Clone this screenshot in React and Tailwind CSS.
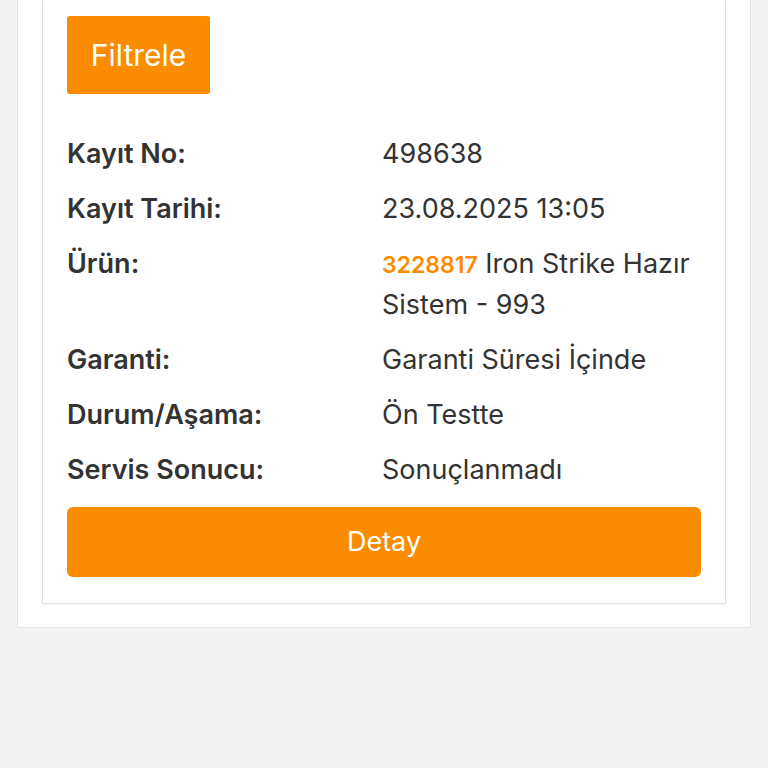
import React from "react";

const rows = [
  { label: "Kayıt No:", value: "498638" },
  { label: "Kayıt Tarihi:", value: "23.08.2025 13:05" },
  {
    label: "Ürün:",
    value: (
      <>
        <span className="text-[23px] font-semibold text-[#fb8c00]">3228817</span>{" "}
        <span>Iron Strike Hazır Sistem - 993</span>
      </>
    ),
  },
  { label: "Garanti:", value: "Garanti Süresi İçinde" },
  { label: "Durum/Aşama:", value: "Ön Testte" },
  { label: "Servis Sonucu:", value: "Sonuçlanmadı" },
];

export default function App() {
  return (
    <div className="min-h-screen bg-[#f3f3f3] font-['Inter',sans-serif] text-[#333]">
      {/* Outer panel */}
      <div className="mx-[17px] bg-white border-x border-b border-[#e4e4e4] px-[24px] pb-[23px]">
        {/* Inner card */}
        <div className="bg-white border-x border-b border-[#e2e2e2] shadow-[0_1px_2px_rgba(0,0,0,0.06)] px-[24px] pt-[16px] pb-[26px]">
          <button className="w-[143px] h-[78px] rounded-[3px] bg-[#fb8c00] text-white text-[30px] font-normal">
            Filtrele
          </button>

          <div className="mt-[40px] flex flex-col gap-[15px]">
            {rows.map((row, i) => (
              <div key={i} className="grid grid-cols-[315px_1fr] text-[27px] leading-[40px]">
                <div className="font-semibold">{row.label}</div>
                <div className="pr-[4px]">{row.value}</div>
              </div>
            ))}
          </div>

          <button className="mt-[17px] w-full h-[70px] rounded-[6px] bg-[#fb8c00] text-white text-[27px]">
            Detay
          </button>
        </div>
      </div>
    </div>
  );
}
